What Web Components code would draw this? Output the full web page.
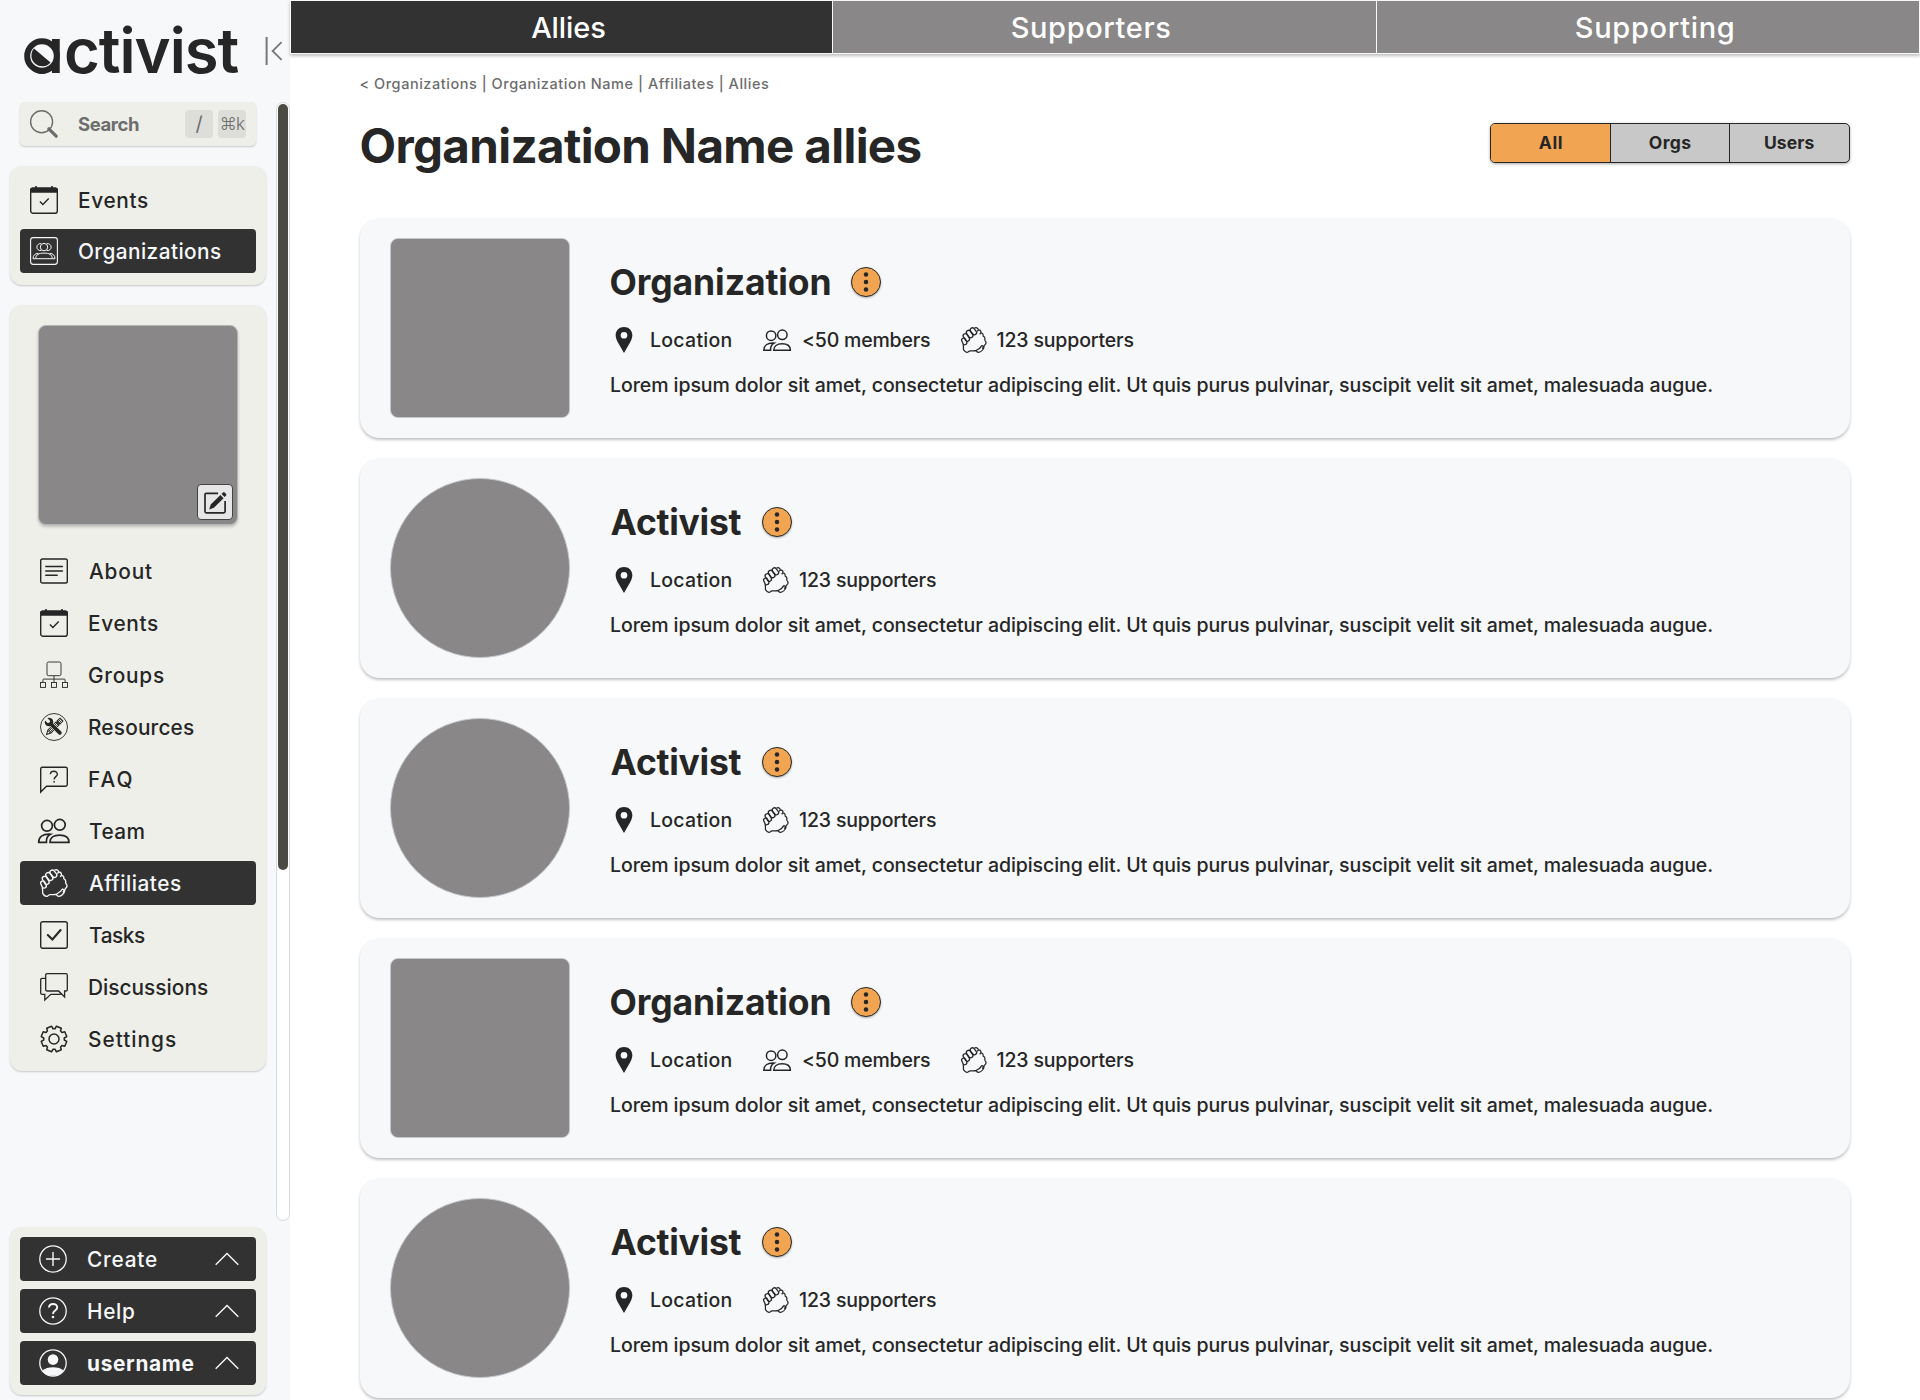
<!DOCTYPE html>
<html lang="en">
<head>
<meta charset="utf-8">
<title>activist</title>
<style>
html,body{margin:0;height:1400px;overflow:hidden;background:#fff}
body{font-family:Inter,"Liberation Sans",sans-serif;color:#262626}
</style>
</head>
<body>
<activist-app></activist-app>
<script>
const define = (name, css, html, setup) => {
  const tpl = document.createElement('template');
  tpl.innerHTML = `<style>:host{display:block;box-sizing:border-box}*{box-sizing:border-box}${css}</style>${html}`;
  customElements.define(name, class extends HTMLElement {
    connectedCallback() {
      if (this.shadowRoot) return;
      this.attachShadow({mode: 'open'}).append(tpl.content.cloneNode(true));
      if (setup) setup(this, this.shadowRoot);
    }
  });
};

/* One-line label whose letters are tracked so the ink spans exactly `w` pixels. */
const ctx = document.createElement('canvas').getContext('2d');
define('fit-text', `:host{display:block;flex:none;white-space:pre}span{display:block}`, `<span></span>`, (el, root) => {
  const t = el.getAttribute('text'), w = +el.getAttribute('w');
  const size = +el.getAttribute('size'), weight = el.getAttribute('weight') || 500;
  const s = root.querySelector('span');
  s.textContent = t;
  ctx.font = `${weight} ${size}px Inter, "Liberation Sans", sans-serif`;
  const m = ctx.measureText(t);
  const ink = m.actualBoundingBoxRight + m.actualBoundingBoxLeft;
  el.style.width = w + 'px';
  s.style.cssText = `font-size:${size}px;font-weight:${weight};line-height:${Math.round(size * 1.2)}px;` +
    `letter-spacing:${(w - ink) / Math.max(1, t.length - 1)}px;margin-left:${m.actualBoundingBoxLeft}px;margin-right:-40px`;
});

const gear = (() => {
  const p = [];
  for (let i = 0; i < 8; i++) {
    const c = (i + .5) * 45;
    for (const [d, r] of [[-17, 10.3], [-11.5, 13], [11.5, 13], [17, 10.3]]) {
      const a = (c + d - 90) * Math.PI / 180;
      p.push((14 + r * Math.cos(a)).toFixed(2) + ' ' + (14 + r * Math.sin(a)).toFixed(2));
    }
  }
  return 'M' + p.join('L') + 'Z';
})();

const ICONS = {
  search: `<g stroke="#6d6d6d"><circle cx="11.6" cy="11.7" r="11" stroke-width="1.4"/><path d="M18.8 18.8l7.4 7.4" stroke-width="3.2" stroke-linecap="round"/></g>`,
  calendar: `<rect x=".7" y="2.2" width="26.6" height="25.1" rx="2.4" stroke-width="1.4"/><path d="M0 6.7V4a2.5 2.5 0 0 1 2.5-2.5h23A2.5 2.5 0 0 1 28 4v2.7zM5.2 0h1.6v3H5.2zM21.2 0h1.6v3h-1.6z" fill="currentColor" stroke="none"/><path d="M9.9 15.6l3 3 5.8-6" stroke-width="1.4"/>`,
  org: `<rect x=".6" y=".6" width="26.8" height="26.8" rx="2.6" stroke-width="1.1"/><g stroke-width="1"><circle cx="14" cy="10.1" r="3.7"/><path d="M11.2 6.7a3.5 3.5 0 1 0 0 6.8M16.8 6.7a3.5 3.5 0 1 1 0 6.8M5.7 21.7c0-4 3-5.6 8.300-5.6s8.300 1.600 8.300 5.600zM8.300 16.300c-3.400.3-5.300 2.100-5.300 5.400h2.700M19.700 16.300c3.400.3 5.300 2.100 5.300 5.400h-2.700"/></g>`,
  about: `<rect x=".7" y="2" width="26.6" height="24" rx="1.800" stroke-width="1.400"/><path d="M5.800 9.600h16.600M5.800 14h16.600M5.800 18.300h11.400" stroke-width="1.500" stroke-linecap="round"/>`,
  groups: `<g stroke-width=".9"><rect x="7" y="1" width="14" height="13.700" rx="1.600"/><path d="M14 14.700v6.600M2.900 21.300v-2.600q0-.6.6-.6h21q.6 0 .6.600v2.600"/><rect x=".5" y="21.500" width="5" height="4.900"/><rect x="11.500" y="21.500" width="5" height="4.900"/><rect x="22.500" y="21.500" width="5" height="4.900"/></g>`,
  tools: `<circle cx="14" cy="14" r="13.500" stroke-width=".9"/><g transform="rotate(45 14 14)"><path d="M11.900 3.500h4.200v4.200h-4.200zM11.900 9h4.200v11.500l-2.100 4-2.100-4z" fill="none" stroke-width="1"/><path d="M13.300 4v17M14.800 4v17M12 20.700h4" stroke-width=".9"/></g><g transform="rotate(-45 14 14)"><path d="M14 9v13.500" stroke="#eeefe9" stroke-width="5" stroke-linecap="round"/><path d="M14 9.500v12.800" stroke-width="3.700" stroke-linecap="round"/><path d="M12.300 3v3.700l1.700 1.200 1.700-1.200V3a4.300 4.300 0 1 1-3.400 0z" fill="currentColor" stroke="none"/></g>`,
  faq: `<path d="M.7 27V4q0-1.700 1.700-1.700h23.200q1.700 0 1.700 1.700v15.600q0 1.700-1.700 1.700H6.500z" stroke-width="1.400"/><path d="M10.400 9.300c.1-4 6.900-4 6.900-.1 0 2.400-3.200 2.500-3.200 5.200" stroke-width="1.400"/><circle cx="14.100" cy="16.800" r=".9" fill="currentColor" stroke="none"/>`,
  team: `<g stroke-width="1.700" transform="translate(-.4 1.200)"><circle cx="7.400" cy="7.600" r="5.400"/><circle cx="20.200" cy="6.600" r="5.400"/><path d="M10.400 24.100c0-4.600 3.600-7.200 9.500-7.200s9.500 2.600 9.500 7.200zM9.300 16c-6 0-10.200 2.900-10.200 8.100h7.700c-.2-3.700 1-6.400 4-8z"/></g>`,
  hands: `<g stroke-width="1.350" stroke-linejoin="round"><rect x="-2.200" y="-3.700" width="4.400" height="7.400" rx="2.200" transform="translate(3.500 15.500) rotate(-24)"/><rect x="-2.300" y="-4.400" width="4.600" height="8.800" rx="2.300" transform="translate(5.700 11.300) rotate(-32)"/><rect x="-2.300" y="-4.400" width="4.600" height="8.800" rx="2.300" transform="translate(9.300 7.500) rotate(-36)"/><rect x="-2.300" y="-4.100" width="4.600" height="8.200" rx="2.300" transform="translate(13.400 4.700) rotate(-38)"/><path d="M14.500 1.300c1.600-1.200 3.800-.4 4.200 1.700 2-.1 3.200 1.600 2.700 3.500M18.700 3l-1.300 1.700M21.400 6.300c2 .2 3 1.900 2.300 3.800M21.400 6.300l-1.200 1.600M23.700 9.900c2 .6 2.700 2.700 1.600 4.500M25.300 14.200c2 1.200 2.300 3.300.6 4.800-1.400 1.300-1.500 3.200-3.100 4.300M2.100 18.600c.6 1.600.7 2.700.5 3.800-.5 2 1.500 4.600 3.800 5 1.300.2 1.700-1.400 3.500-1.700 2.600-.3 4.600.4 6.900-.6M16.600 25c2.200-1 4.600-2.700 5.900-5l2.300 1.600c-.6 2.900-3.400 5.400-5.900 5.700-1.400.1-2.500-1.100-2.300-2.300z"/></g>`,
  task: `<rect x=".7" y=".7" width="26.600" height="26.600" rx="2" stroke-width="1.400"/><path d="M7.800 14l4.600 4.500L20.600 9" stroke-width="2.100" stroke-linecap="round"/>`,
  chat: `<g stroke-width="1.300"><path d="M7.200.7h18.600q1.500 0 1.500 1.500V17q0 1-1.500 1h-1.200v6l-6-6H7.200q-1.500 0-1.500-1.500V2.200Q5.700.7 7.200.7z"/><path d="M5.700 5.400H2.200q-1.500 0-1.500 1.500V20q0 1.300 1.500 1.300h2.600v5.600l6-5.600h7.400l3.500-.3"/></g>`,
  gear: `<path d="${gear}" stroke-width="1.500" stroke-linejoin="round"/><circle cx="14" cy="14" r="5" stroke-width="1.500"/>`,
  plus: `<circle cx="14" cy="14" r="13.200" stroke-width="1.300"/><path d="M14 7v14M7 14h14" stroke-width="1.400"/>`,
  help: `<circle cx="14" cy="14" r="13.200" stroke-width="1.300"/><path d="M10 10.600c.1-4.800 8.200-4.800 8.200-.1 0 3.100-4.200 3-4.200 6.400" stroke-width="1.900"/><circle cx="14" cy="20" r="1.300" fill="currentColor" stroke="none"/>`,
  user: `<circle cx="14" cy="14" r="13.200" stroke-width="1.300"/><circle cx="14" cy="10.600" r="5.300" fill="currentColor" stroke="none"/><path d="M3.500 21.700c4-4.600 17-4.600 21 0a13.300 13.300 0 0 1-21 0z" fill="currentColor" stroke="none"/>`,
  chevron: `<path d="M2.700 19.700L14 8.600l11.300 11.100" stroke-width="1.400"/>`,
  collapse: `<path d="M4.600 0v28" stroke-width="2"/><path d="M19.600 5.200L10.600 14l9 8.900" stroke-width="1.800"/>`,
  pin: `<path d="M14 0C9 0 5 3.700 5 8.800c0 2.700 1.200 5.200 2.500 7.800L14 28l6.500-11.400C21.800 14 23 11.500 23 8.800 23 3.700 19 0 14 0zm0 5.300a3.600 3.600 0 1 1 0 7.200 3.600 3.600 0 0 1 0-7.200z" fill="currentColor" stroke="none"/>`,
  edit: `<path d="M17 5.300H5.300a1.300 1.300 0 0 0-1.300 1.300v17a1.300 1.300 0 0 0 1.300 1.300h17.500a1.300 1.300 0 0 0 1.300-1.300V13" stroke-width="1.700"/><path d="M8.200 21.400l1.500-4.800L19.400 7l3.200 3.200-9.700 9.600zM20.500 5.900l1.500-1.500q.8-.7 1.600 0l1.500 1.500q.7.800 0 1.600l-1.500 1.500z" fill="currentColor" stroke="none"/>`,
  dots: `<g fill="currentColor" stroke="none"><circle cx="14" cy="7" r="2.100"/><circle cx="14" cy="14" r="2.100"/><circle cx="14" cy="21" r="2.100"/></g>`
};
define('ui-icon', `:host{flex:none;width:28px;height:28px}svg{display:block;width:100%;height:100%;overflow:visible}`, ``, (el, root) => {
  root.innerHTML += `<svg viewBox="0 0 28 28" fill="none" stroke="currentColor">${ICONS[el.getAttribute('name')]}</svg>`;
});

define('brand-logo', `:host{height:102px;padding:14px 0 0 24px;display:flex;align-items:flex-start}
.word{position:relative;width:216px;height:74px;flex:none;white-space:nowrap;font-size:61.500px;line-height:74px;font-weight:600;font-feature-settings:"cv11";color:#262626}
.a{display:inline-block;width:40px;text-align:right}
.mark{position:absolute;left:0;top:24px;width:36px;height:36px}
ui-icon{margin:23px 0 0 21.500px;color:#777}`,
`<div class="word"><span class="a">a</span><span class="rest">ctivist</span><svg class="mark" viewBox="0 0 36 36"><circle cx="18" cy="18" r="14.800" fill="#f6f8fa" stroke="#262626" stroke-width="6"/><path d="M10 10.500L26.500 24.500A10 10 0 0 1 10 10.500z" fill="#262626"/></svg></div><ui-icon name="collapse"></ui-icon>`,
(el, root) => {
  const rest = root.querySelector('.rest');
  ctx.font = '600 61.5px Inter, "Liberation Sans", sans-serif';
  const m = ctx.measureText('ctivist');
  rest.style.letterSpacing = (172.5 - m.actualBoundingBoxRight - m.actualBoundingBoxLeft) / 6 + 'px';
});

define('search-box', `:host{display:flex;align-items:center;width:236px;height:44px;margin-left:20px;padding:0 10px;border-radius:5px;background:#eeefe9;box-shadow:0 1px 2px rgba(0,0,0,.2);color:#6d6d6d}
fit-text{margin-left:20px}.keys{display:flex;gap:5px;margin-left:auto}.k{width:28px;height:28px;border-radius:4px;background:#dddeda;display:flex;align-items:center;justify-content:center;font:400 20px/28px Inter,sans-serif}.k.c{font:300 17px/28px Inter,"DejaVu Sans",sans-serif;letter-spacing:-.8px}`,
`<ui-icon name="search" style="margin-top:-1px"></ui-icon><fit-text text="Search" w="61" size="18.500" weight="700"></fit-text><div class="keys"><span class="k">/</span><span class="k c">⌘k</span></div>`);

class NavRow extends HTMLElement {
  connectedCallback() {
    const g = n => this.getAttribute(n);
    this.attachShadow({mode: 'open'}).innerHTML = `<style>
:host{display:flex;align-items:center;height:44px;box-sizing:border-box;padding-left:var(--in,20px);border-radius:4px}
:host([active]){background:#323232;color:#f6f8fa}
fit-text{margin-left:21px}.end{margin:0 15px 0 auto}</style>
<ui-icon name="${g('icon')}"></ui-icon><fit-text text="${g('label')}" w="${g('w')}" size="20.800" weight="${g('weight') || 500}"></fit-text>${this.hasAttribute('menu') ? '<ui-icon class="end" name="chevron"></ui-icon>' : ''}`;
  }
}
customElements.define('nav-row', NavRow);

define('nav-panel', `:host{width:256px;margin-left:10px;padding:10px;border-radius:12px;background:#eeefe9;box-shadow:0 1px 2px rgba(0,0,0,.2);display:flex;flex-direction:column;gap:8px}`, `<slot></slot>`);

define('org-image', `:host{width:200px;height:200px;margin:10px 0 16px 18px;border:1px solid #b4b5b7;border-radius:8px;background:#898787;box-shadow:0 2px 3px rgba(0,0,0,.2);display:flex;align-items:flex-end;justify-content:flex-end;padding:4px}
.b{width:36px;height:36px;border:1px solid #444;border-radius:4px;background:#e6e6e6;display:flex;align-items:center;justify-content:center;color:#262626}`,
`<div class="b"><ui-icon name="edit"></ui-icon></div>`);

define('side-bar', `:host{width:290px;height:1400px;background:#f6f8fa;display:flex;flex-direction:column}
.mid{display:flex;height:1119px;justify-content:space-between}
.col{display:flex;flex-direction:column;gap:20px}
.top{--in:10px;height:119px;padding-top:12px;gap:7px}.foot{--in:19px;margin-top:6px}
.track{width:14px;height:1119px;border:1px solid #d5dbe3;border-radius:7px;background:#fff;padding:1px}
.thumb{height:766px;border-radius:5px;background:#4b4b43}`,
`<brand-logo></brand-logo>
<div class="mid"><div class="col"><search-box></search-box>
<nav-panel class="top"><nav-row icon="calendar" label="Events" w="69"></nav-row><nav-row icon="org" label="Organizations" w="142" active></nav-row></nav-panel>
<nav-panel><org-image></org-image>
<nav-row icon="about" label="About" w="63"></nav-row>
<nav-row icon="calendar" label="Events" w="69"></nav-row>
<nav-row icon="groups" label="Groups" w="75"></nav-row>
<nav-row icon="tools" label="Resources" w="105"></nav-row>
<nav-row icon="faq" label="FAQ" w="42.500"></nav-row>
<nav-row icon="team" label="Team" w="54.500"></nav-row>
<nav-row icon="hands" label="Affiliates" w="92" active></nav-row>
<nav-row icon="task" label="Tasks" w="56"></nav-row>
<nav-row icon="chat" label="Discussions" w="119"></nav-row>
<nav-row icon="gear" label="Settings" w="87"></nav-row></nav-panel></div>
<div class="track"><div class="thumb"></div></div></div>
<nav-panel class="foot"><nav-row icon="plus" label="Create" w="69" active menu></nav-row><nav-row icon="help" label="Help" w="46" active menu></nav-row><nav-row icon="user" label="username" w="105.500" weight="700" active menu></nav-row></nav-panel>`);

define('page-tabs', `:host{display:flex;height:54px;box-shadow:0 2px 3px rgba(0,0,0,.25)}
div{width:33.3333%;border:1px solid #f6f8fa;border-left-width:0;background:#898787;color:#fff;display:flex;align-items:center;justify-content:center;padding-top:1px}
div:first-of-type{background:#323232;border-left-width:1px}.r{padding-left:13px}.l{padding-right:27px}`,
`<div class="r"><fit-text text="Allies" w="74" size="29"></fit-text></div><div class="l"><fit-text text="Supporters" w="158.500" size="29"></fit-text></div><div class="r"><fit-text text="Supporting" w="157" size="29"></fit-text></div>`);

define('filter-tabs', `:host{display:flex;width:360px;height:40px;border:1px solid #262626;border-radius:5px;overflow:hidden;background:#c8c8c8;box-shadow:0 1px 3px rgba(0,0,0,.35)}
div{flex:1;display:flex;align-items:center;justify-content:center;padding-bottom:1px}div+div{border-left:1px solid #262626}div:first-of-type{background:#f1a553}`,
`<div><fit-text text="All" w="23" size="17.500" weight="700"></fit-text></div><div><fit-text text="Orgs" w="42.500" size="17.500" weight="700"></fit-text></div><div><fit-text text="Users" w="49.500" size="17.500" weight="700"></fit-text></div>`);

class AllyCard extends HTMLElement {
  connectedCallback() {
    const org = this.getAttribute('kind') === 'org';
    this.attachShadow({mode: 'open'}).innerHTML = `<style>
:host{display:flex;box-sizing:border-box;height:220px;padding:20px 30px;gap:40px;border-radius:20px;background:#f6f8fa;box-shadow:0 2px 3px rgba(0,0,0,.24)}
.pic{box-sizing:border-box;width:180px;height:180px;flex:none;border:1px solid #c4c7cb;border-radius:${org ? '8px' : '50%'};background:#898787}
.body{display:flex;flex-direction:column;padding:22px 0 0 .5px}
.row{display:flex;align-items:center}
.head{height:44px;gap:${org ? 21 : 20.5}px}.meta{height:28px;margin-top:22px}
.desc{margin-top:19px;height:24px;display:flex;align-items:center}
.more{box-sizing:border-box;width:30px;height:30px;border:1.500px solid #262626;border-radius:50%;background:#f1a553;display:flex;align-items:center;justify-content:center;box-shadow:0 1px 2px rgba(0,0,0,.3)}
.more ui-icon{width:30px;height:30px}
.meta ui-icon{width:26px;height:26px}
.meta ui-icon[name=team]{width:24.500px;height:24.500px}
</style>
<div class="pic"></div><div class="body">
<div class="row head"><fit-text text="${org ? 'Organization' : 'Activist'}" w="${org ? 219 : 131}" size="35.500" weight="650"></fit-text><div class="more"><ui-icon name="dots"></ui-icon></div></div>
<div class="row meta"><ui-icon name="pin"></ui-icon><fit-text style="margin-left:14.500px" text="Location" w="80.500" size="19.500"></fit-text>
${org ? '<ui-icon name="team" style="margin-left:33.500px"></ui-icon><fit-text style="margin-left:13.500px" text="&lt;50 members" w="127" size="19.500"></fit-text>' : ''}
<ui-icon name="hands" style="margin-left:${org ? 30.5 : 31.5}px"></ui-icon><fit-text style="margin-left:10px" text="123 supporters" w="137" size="19.500"></fit-text></div>
<div class="desc"><fit-text style="margin-left:.5px" text="Lorem ipsum dolor sit amet, consectetur adipiscing elit. Ut quis purus pulvinar, suscipit velit sit amet, malesuada augue." w="1102" size="19.500"></fit-text></div>
</div>`;
  }
}
customElements.define('ally-card', AllyCard);

define('activist-app', `:host{display:flex;width:1920px;height:1400px;overflow:hidden}
main{flex:1;display:flex;flex-direction:column}
.content{padding:19px 70px 0}
.crumbs{height:20px;color:#6d6d6d;display:flex;align-items:center;margin-left:.5px}
.head{display:flex;justify-content:space-between;align-items:center;height:58px;margin:23px 0 44px;padding-left:1.500px}
.head filter-tabs{margin-top:-4px}
.list{display:flex;flex-direction:column;gap:20px}`,
`<side-bar></side-bar><main><page-tabs></page-tabs><div class="content">
<div class="crumbs"><fit-text text="&lt; Organizations | Organization Name | Affiliates | Allies" w="408.500" size="14.500"></fit-text></div>
<div class="head"><fit-text text="Organization Name allies" w="559" size="47.500" weight="700"></fit-text><filter-tabs></filter-tabs></div>
<div class="list"><ally-card kind="org"></ally-card><ally-card kind="user"></ally-card><ally-card kind="user"></ally-card><ally-card kind="org"></ally-card><ally-card kind="user"></ally-card></div>
</div></main>`);
</script>
</body>
</html>
